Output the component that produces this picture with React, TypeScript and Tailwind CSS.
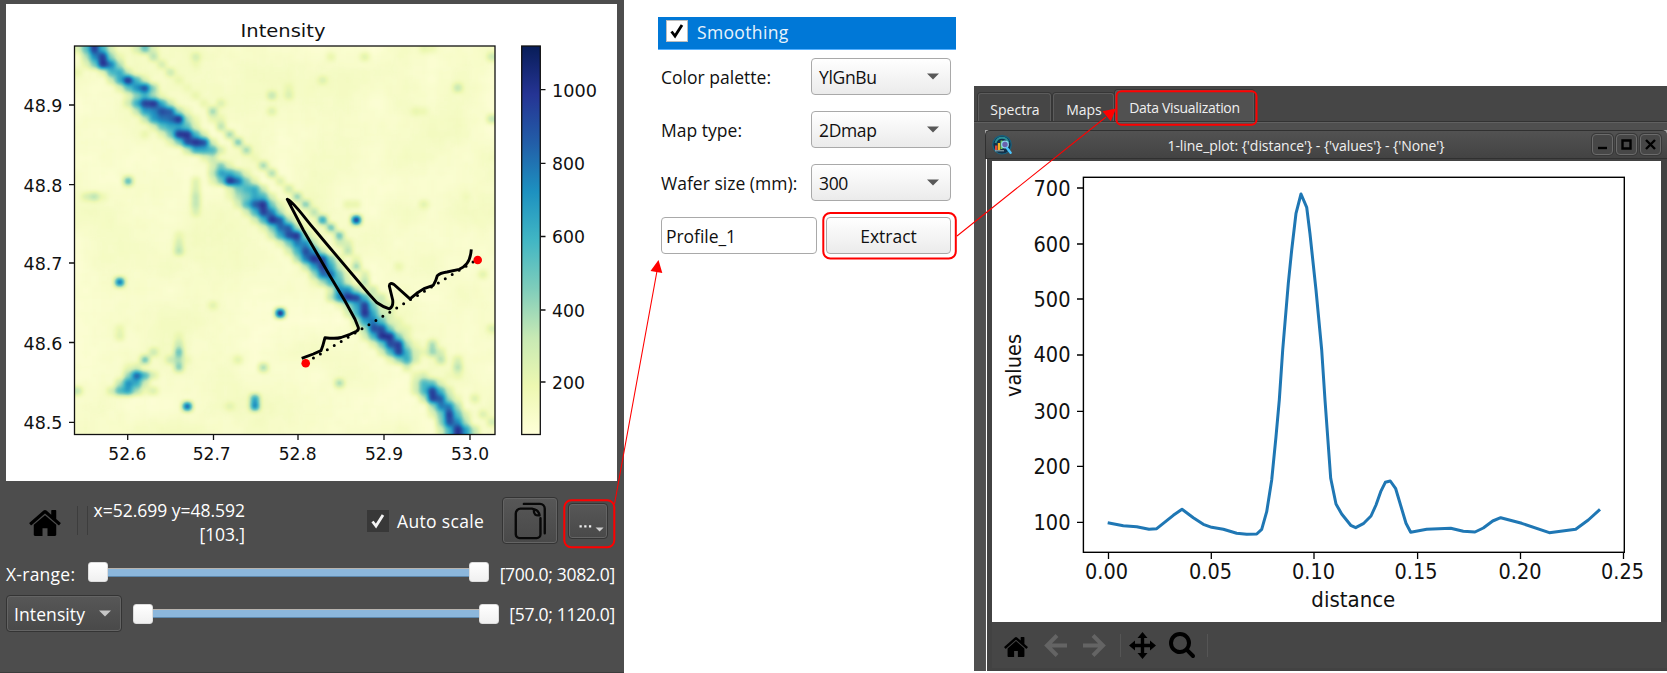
import React from "react";

/* ---------- intensity map data: row -> [column, value] pairs on a 50x50 grid ---------- */
const ROWS: string[] = [
  "1:.45 2:.95 3:.5 7:.2 8:.45 41:.15 42:.12",
  "2:.7 3:.95 4:.35 9:.3 14:.22 30:.15 34:.18 49:.25",
  "2:.4 3:1 4:.75 10:.22 14:.12",
  "3:.15 4:.5 5:.6 11:.25 0:.14",
  "5:.55 6:1 7:.5 12:.15 29:.2",
  "6:.45 7:.7 8:.9 13:.12 25:.15 45:.28",
  "7:.35 8:.5 9:.3 14:.15 23:.28 25:.2",
  "7:.55 8:.95 9:1 10:.6 15:.15 17:.2",
  "8:.65 9:.7 10:.9 11:.85 12:.3 16:.35 23:.2 40:.15 41:.12",
  "9:.65 10:.75 11:.8 12:1 13:.3 16:.15 17:.15 49:.28",
  "10:.45 11:.55 12:.6 13:.45 17:.3",
  "11:.4 12:1 13:1 14:.5 18:.35 8:.14",
  "12:.4 13:.9 14:1 15:.9 16:.2 19:.42",
  "14:.6 15:.6 16:.5 20:.35",
  "15:.15 16:.25 21:.12",
  "16:.2 17:.4 22:.35",
  "17:.65 18:.6 19:.4 23:.33",
  "17:.4 18:1 19:.8 20:.4 6:.5 14:.18 24:.2",
  "19:.4 20:.5 21:.6 14:.2 25:.25",
  "19:.3 20:.4 21:.6 22:.5 1:.2 2:.3 14:.28 26:.38 46:.1",
  "20:.5 21:.85 22:1 23:.4 14:.28 27:.4 32:.15 33:.15 41:.18",
  "21:.5 22:.95 23:.75 14:.2 28:.3",
  "22:.5 23:1 24:.85 25:.3 29:.6 33:.95",
  "23:.4 24:.8 25:.85 26:.3 30:.45",
  "24:.6 25:.9 26:1 27:.3 31:.45 12:.15",
  "25:.4 26:.75 27:.7 31:.22 32:.2 12:.22",
  "26:.5 27:.9 28:.65 32:.3 12:.3",
  "27:.75 28:1 29:.9 30:.4 33:.15",
  "28:.65 29:.95 30:.6 33:.35 38:.15",
  "29:.8 30:.8 31:.4 34:.2 48:.18",
  "29:.3 30:.6 31:.5 34:.3 5:.78",
  "30:.2 31:.7 32:.7 33:.3 35:.25",
  "31:.7 32:1 33:.95 34:.5 36:.25",
  "32:.3 33:.6 34:.95 35:.4 36:.2 37:.2 16:.18",
  "33:.5 34:1 35:.6 37:.2 24:1",
  "34:.65 35:.75 36:.45 38:.15",
  "34:.3 35:.9 36:.9 37:.4 39:.15 5:.15 49:.2",
  "35:.5 36:1 37:1 38:.4 5:.18 12:.15",
  "36:.4 37:.9 38:.95 39:.3 42:.33 12:.25",
  "37:.5 38:.95 39:.5 42:.35 43:.2 12:.45 9:.25",
  "38:.35 39:.55 43:.3 45:.2 12:.3 11:.25 8:.45 19:.18",
  "39:.2 45:.3 12:.4 7:.2 6:.15 22:.34",
  "40:.15 41:.2 45:.15 44:.1 7:.85 8:.5",
  "41:.5 42:.45 6:.7 7:.55 31:.34",
  "41:.5 42:.95 43:.5 5:.5 6:.65 7:.3 9:.2 0:.28",
  "41:.25 42:.95 43:.85 44:.3 47:.2 21:.6",
  "43:.75 44:.75 13:.85 21:.7 18:.18",
  "43:.4 44:.95 45:.45 48:.2",
  "44:.9 45:.7 49:.22",
  "44:.5 45:1 46:.65",
];

const SIZE = 50;

function hash(a: number, b: number): number {
  const s = Math.sin(a * 127.1 + b * 311.7) * 43758.5453;
  return s - Math.floor(s);
}

/** Faint background signal: a coarse and a fine layer of value noise. */
function background(c: number, r: number): number {
  const step = 3.5;
  const x0 = Math.floor(c / step);
  const y0 = Math.floor(r / step);
  const fx = c / step - x0;
  const fy = r / step - y0;
  const coarse =
    hash(x0, y0) * (1 - fx) * (1 - fy) +
    hash(x0 + 1, y0) * fx * (1 - fy) +
    hash(x0, y0 + 1) * (1 - fx) * fy +
    hash(x0 + 1, y0 + 1) * fx * fy;
  return 0.008 + 0.065 * coarse + 0.018 * hash(c + 71, r + 13);
}

const GRID: number[][] = ROWS.map((row, r) => {
  const line = Array.from({ length: SIZE }, (_, c) => background(c, r));
  const given = new Map<number, number>();
  row.split(" ").forEach((pair) => {
    const [c, v] = pair.split(":");
    given.set(Number(c), Number(v));
  });
  given.forEach((v, c) => {
    const inRun = given.has(c - 1) || given.has(c + 1);
    line[c] = inRun && v > 0.55 ? v * 0.92 : v;
  });
  // Cells in a band fade out into their free neighbours.
  given.forEach((v, c) => {
    [-1, 1].forEach((d) => {
      const next = c + d;
      if (v >= 0.3 && given.has(c - d) && !given.has(next) && next >= 0 && next < SIZE) {
        line[next] = Math.max(line[next], v * 0.4);
      }
    });
  });
  return line;
});

const clampIndex = (n: number) => Math.max(0, Math.min(SIZE - 1, n));

const PLOT_FONT = "font-['DejaVu_Sans',sans-serif]";
const UI_FONT = "font-['Open_Sans','Noto_Sans',sans-serif]";

interface LabelProps {
  x: number;
  y: number;
  w: number;
  children: string;
  anchor?: "start" | "middle" | "end";
  size?: number;
  transform?: string;
}

function PlotLabel({ x, y, w, children, anchor = "middle", size = 18, transform }: LabelProps) {
  return (
    <text x={x} y={y} textLength={w} lengthAdjust="spacingAndGlyphs" textAnchor={anchor} fontSize={size} fill="#111" transform={transform}>
      {children}
    </text>
  );
}

function IntensityMap() {
  const cells: React.ReactElement[] = [];
  for (let r = -1; r <= SIZE; r++) {
    for (let c = -1; c <= SIZE; c++) {
      const g = Math.round(GRID[clampIndex(r)][clampIndex(c)] * 255);
      cells.push(
        <rect key={`${r}:${c}`} x={73.3 + c * 8.45} y={45.2 + r * 7.77} width={8.6} height={7.9} fill={`rgb(${g},${g},${g})`} />,
      );
    }
  }
  return (
    <svg viewBox="6 4 611 477" className={`block h-[477px] w-[611px] bg-white ${PLOT_FONT}`}>
      <defs>
        <filter id="ylgnbu" filterUnits="userSpaceOnUse" x="60" y="30" width="450" height="420" colorInterpolationFilters="sRGB">
          <feGaussianBlur stdDeviation="2.9" />
          <feComponentTransfer>
            <feFuncR type="table" tableValues="1 .929 .78 .498 .255 .114 .133 .145 .031" />
            <feFuncG type="table" tableValues="1 .973 .914 .804 .714 .569 .369 .204 .114" />
            <feFuncB type="table" tableValues=".851 .694 .706 .733 .769 .753 .659 .58 .345" />
          </feComponentTransfer>
        </filter>
        <clipPath id="axes">
          <rect x="74.5" y="46" width="420.5" height="388.5" />
        </clipPath>
        <linearGradient id="bar" x1="0" y1="1" x2="0" y2="0">
          <stop offset="0" stopColor="#ffffd9" />
          <stop offset=".125" stopColor="#edf8b1" />
          <stop offset=".25" stopColor="#c7e9b4" />
          <stop offset=".375" stopColor="#7fcdbb" />
          <stop offset=".5" stopColor="#41b6c4" />
          <stop offset=".625" stopColor="#1d91c0" />
          <stop offset=".75" stopColor="#225ea8" />
          <stop offset=".875" stopColor="#253494" />
          <stop offset="1" stopColor="#081d58" />
        </linearGradient>
      </defs>
      <PlotLabel x={283} y={36.5} w={85}>Intensity</PlotLabel>
      <g clipPath="url(#axes)">
        <g filter="url(#ylgnbu)">{cells}</g>
      </g>
      <path d="M306.5 362.3 L475 260.8" stroke="#000" strokeWidth="3" strokeLinecap="round" strokeDasharray="0 8.1" />
      <circle cx="305.7" cy="363.3" r="4.3" fill="#f00" />
      <circle cx="477.7" cy="260" r="4.3" fill="#f00" />
      <path
        d="M301.7 358.3 L313.3 354 L321 350.7 Q323 346 325 337.7 Q336 339 341 337.5 L350 334.3 L356 331.5 Q359 330 358.3 327.5 L355 319.3 L345 301 L330 276 L303.3 230 L287.3 199.3 C295 203 305 219 315 230 L323.3 240 L368.3 293.3 L376.7 302.5 Q383 307 389.3 308.8 Q393.5 307 392.7 300 L389.3 286 Q389.5 282 394 284.5 L410 298.8 L416.7 293.3 L424 288.6 L433.3 285.3 Q436 281 437.3 275.7 Q440 273 447 272 L459.3 269.3 Q464 267 467 263.3 Q470.5 259 471.3 249.3"
        fill="none" stroke="#000" strokeWidth="2.9" strokeLinejoin="round"
      />
      <rect x="74.5" y="46" width="420.5" height="388.5" fill="none" stroke="#111" strokeWidth="1.3" />
      <path d="M127.7 435v5M213.5 435v5M298 435v5M384 435v5M470 435v5M74 422.3h-5M74 342.5h-5M74 263h-5M74 184.7h-5M74 105h-5" stroke="#111" strokeWidth="1.3" />
      <PlotLabel x={127.3} y={460} w={38}>52.6</PlotLabel>
      <PlotLabel x={211.7} y={460} w={38}>52.7</PlotLabel>
      <PlotLabel x={297.7} y={460} w={38}>52.8</PlotLabel>
      <PlotLabel x={384} y={460} w={38}>52.9</PlotLabel>
      <PlotLabel x={470} y={460} w={38}>53.0</PlotLabel>
      <PlotLabel x={43} y={112} w={39}>48.9</PlotLabel>
      <PlotLabel x={43} y={191.5} w={39}>48.8</PlotLabel>
      <PlotLabel x={43} y={270} w={39}>48.7</PlotLabel>
      <PlotLabel x={43} y={349.5} w={39}>48.6</PlotLabel>
      <PlotLabel x={43} y={429} w={39}>48.5</PlotLabel>
      <rect x="521.7" y="46" width="18.6" height="388.5" fill="url(#bar)" stroke="#111" strokeWidth="1.3" />
      <path d="M541 89.7h4.5M541 163.3h4.5M541 236.5h4.5M541 310h4.5M541 382h4.5" stroke="#111" strokeWidth="1.3" />
      <PlotLabel x={552} y={96.5} w={45} anchor="start">1000</PlotLabel>
      <PlotLabel x={552} y={170} w={33} anchor="start">800</PlotLabel>
      <PlotLabel x={552} y={243.3} w={33} anchor="start">600</PlotLabel>
      <PlotLabel x={552} y={316.7} w={33} anchor="start">400</PlotLabel>
      <PlotLabel x={552} y={388.5} w={33} anchor="start">200</PlotLabel>
    </svg>
  );
}

const CURVE =
  "1107.7,522.7 1123.3,525.7 1136.7,526.7 1149,529.3 1156.7,528.7 1173.3,515.3 1182,509.3 1193.3,517.7 1203.3,524.3 1211.7,527.3 1223.3,529.3 1236.7,533.3 1246.7,534.3 1256.7,534 1261.7,529.3 1266.7,511.7 1271.7,480 1276,436.7 1279.3,400 1282.7,350 1288.3,283.3 1291.7,250 1296,213.3 1301,194 1306.7,207.3 1310,234 1316,290 1321.7,350 1325,400 1330.7,478.3 1336,504 1341.7,514 1350.7,525.3 1355.7,527.7 1363.3,523.7 1371,516 1376,505 1380.7,491.7 1385.3,482.3 1390.3,481 1395.7,488.7 1406,523.3 1410.7,532.3 1426.7,529.3 1450.7,528.3 1463.3,531.3 1475,532 1483.3,528 1492.7,521 1500.7,517.7 1521.7,523.3 1549.3,532.7 1575.7,529.3 1588.3,520 1600,509.3";

function LinePlot() {
  return (
    <svg viewBox="992 161 669 461" className={`block h-[461px] w-[669px] bg-white ${PLOT_FONT}`}>
      <polyline points={CURVE} fill="none" stroke="#1f77b4" strokeWidth="3" strokeLinejoin="round" />
      <rect x="1083.4" y="177.3" width="540.9" height="375" fill="none" stroke="#000" strokeWidth="1.4" />
      <path d="M1083 188h-6M1083 244h-6M1083 299h-6M1083 355h-6M1083 411.3h-6M1083 466.3h-6M1083 522.3h-6M1108.5 553v6M1211.3 553v6M1314 553v6M1417.6 553v6M1520.5 553v6M1623.5 553v6" stroke="#000" strokeWidth="1.3" />
      {[
        ["700", 195.5], ["600", 251.5], ["500", 306.5], ["400", 362], ["300", 418.5], ["200", 473.5], ["100", 529.5],
      ].map(([t, y]) => (
        <PlotLabel key={t} x={1070.5} y={Number(y)} w={37} anchor="end" size={20.5}>{String(t)}</PlotLabel>
      ))}
      {[
        ["0.00", 1106.5], ["0.05", 1210.5], ["0.10", 1313.5], ["0.15", 1416], ["0.20", 1520], ["0.25", 1622.5],
      ].map(([t, x]) => (
        <PlotLabel key={t} x={Number(x)} y={579} w={43} size={20.5}>{String(t)}</PlotLabel>
      ))}
      <PlotLabel x={1353.3} y={607} w={84} size={20.5}>distance</PlotLabel>
      <PlotLabel x={0} y={0} w={63} size={20.5} transform="translate(1021 365.5) rotate(-90)">values</PlotLabel>
    </svg>
  );
}

function HomeIcon({ className }: { className: string }) {
  return (
    <svg viewBox="12 253 1640 1283" preserveAspectRatio="none" className={className} fill="#000">
      <path d="M1408 992v480q0 26-19 45t-45 19h-384v-384h-256v384h-384q-26 0-45-19t-19-45v-480q0-1 .5-3t.5-3l575-474 575 474q1 2 1 6zm223-69l-62 74q-8 9-21 11h-3q-13 0-21-7l-692-577-692 577q-12 8-24 7-13-2-21-11l-62-74q-8-10-7-23.5t11-21.5l719-599q32-26 76-26t76 26l244 204v-195q0-14 9-23t23-9h192q14 0 23 9t9 23v408l219 182q10 8 11 21.5t-7 23.5z" />
    </svg>
  );
}

function Check({ stroke }: { stroke: string }) {
  return (
    <svg viewBox="0 0 16 16" className="h-4 w-4">
      <path d="M2.5 8.5 L6 13 L13 2" fill="none" stroke={stroke} strokeWidth="2.8" />
    </svg>
  );
}

function Caret({ className }: { className: string }) {
  return (
    <svg viewBox="0 0 12 7" className={className} fill="currentColor">
      <path d="M0 .5h12L6 6.5z" />
    </svg>
  );
}

function RangeSlider() {
  return (
    <div className="flex h-5 flex-1 items-center">
      <div className="z-10 h-5 w-5 rounded-[3px] border border-[#dcdcdc] bg-gradient-to-b from-white to-[#f0f0f0]" />
      <div className="-mx-px h-[9px] flex-1 border-y border-t-[#b9b4ae] border-b-[#5d88ad] bg-[#8cb7dc]" />
      <div className="z-10 h-5 w-5 rounded-[3px] border border-[#dcdcdc] bg-gradient-to-b from-white to-[#f0f0f0]" />
    </div>
  );
}

const DARK_BUTTON = "rounded-[4px] border border-[#343434] bg-gradient-to-b from-[#575757] to-[#494949] shadow-[inset_0_0_0_1px_#646464]";

function MapPanel() {
  return (
    <section className={`flex h-[673px] w-[624px] flex-col border-b border-[#3c3c3c] bg-[#4d4d4d] pl-[6px] pt-1 text-[17.5px] text-white ${UI_FONT}`}>
      <IntensityMap />
      <div className="flex h-[79px] items-center pr-[10px]">
        <HomeIcon className="ml-[23px] mt-1 h-[26px] w-8" />
        <div className="ml-4 h-[29px] w-[11px] border-x border-[#3d3d3d]" />
        <div className="mt-[3px] w-[157px] whitespace-nowrap text-right leading-6">
          <div className="tracking-[-0.02px]">x=52.699 y=48.592</div>
          <div className="tracking-[-0.1px]">[103.]</div>
        </div>
        <div className="ml-[122px] flex h-[22px] w-[22px] items-center justify-center bg-[#383838]">
          <Check stroke="#f4f4f4" />
        </div>
        <span className="ml-2 w-[105px] whitespace-nowrap pt-px tracking-[0.35px]">Auto scale</span>
        <button className={`flex h-[47px] w-14 items-center justify-center ${DARK_BUTTON}`}>
          <svg viewBox="0 0 34 40" className="h-[38px] w-[33px]" fill="none" stroke="#080808" strokeWidth="2.5" strokeLinecap="round" strokeLinejoin="round">
            <path d="M10 2h17a5 5 0 0 1 5 5v26" />
            <path d="M27.500 17v17a4 4 0 0 1-4 4h-18a4 4 0 0 1-4-4V12a5 5 0 0 1 5-5h12q7 1 8 7q-6 1-6-5" />
          </svg>
        </button>
        <button className={`relative ml-[10px] h-9 w-10 ${DARK_BUTTON}`}>
          <svg viewBox="0 0 40 36" className="h-full w-full" fill="#eee">
            <path d="M11 22.500h2.400v2.500H11zM16 22.500h2.400v2.500H16zM21 22.500h2.400v2.500H21z" />
            <path d="M28 25h8.500l-4.200 4.200z" fill="#d0d0d0" />
          </svg>
        </button>
      </div>
      <div className="flex h-[24px] items-center">
        <span className="w-[82px] whitespace-nowrap pt-1 tracking-[0.25px]">X-range:</span>
        <div className="flex w-[401px]"><RangeSlider /></div>
        <span className="w-[126px] whitespace-nowrap pt-1 text-right tracking-[-0.3px]">[700.0; 3082.0]</span>
      </div>
      <div className="mt-[11px] flex h-[37px] items-center">
        <div className={`flex h-full w-[116px] items-center justify-between pl-[7px] pr-[10px] ${DARK_BUTTON}`}>
          <span className="pt-0.5 tracking-[0.1px]">Intensity</span>
          <Caret className="h-[7px] w-3 text-[#c6c6c6]" />
        </div>
        <div className="ml-[11px] flex w-[366px]"><RangeSlider /></div>
        <span className="w-[116px] whitespace-nowrap pt-0.5 text-right tracking-[-0.3px]">[57.0; 1120.0]</span>
      </div>
    </section>
  );
}

const LIGHT_BOX = "rounded-[4px] border border-[#a9a9a9]";

function OptionRow({ label, value }: { label: string; value: string }) {
  return (
    <div className="flex h-[37px] items-center justify-between pl-[3px] pr-[5px]">
      <span className="whitespace-nowrap pt-0.5 tracking-[0.02px]">{label}</span>
      <div className={`flex h-full w-[140px] items-center justify-between bg-gradient-to-b from-white to-[#ebebeb] pl-[7px] pr-[11px] ${LIGHT_BOX}`}>
        <span className="pt-0.5">{value}</span>
        <Caret className="h-[7px] w-3 text-[#585858]" />
      </div>
    </div>
  );
}

function OptionsPanel() {
  return (
    <section className={`ml-[34px] mt-[17px] flex w-[298px] flex-col gap-4 text-[17.5px] tracking-[-0.35px] text-[#101010] ${UI_FONT}`}>
      <header className="mb-[-8px] flex h-[33px] items-center border-b border-[#55b0ff] bg-[#0078d7] pl-2 text-[#e8f3fc]">
        <div className="mt-[-4px] flex h-[22px] w-[22px] items-center justify-center border border-[#bdbdbd] bg-white">
          <Check stroke="#000" />
        </div>
        <span className="ml-[9px] pb-px tracking-[0.35px]">Smoothing</span>
      </header>
      <OptionRow label="Color palette:" value="YlGnBu" />
      <OptionRow label="Map type:" value="2Dmap" />
      <OptionRow label="Wafer size (mm):" value="300" />
      <div className="flex h-[37px] justify-between pl-[3px] pr-[5px]">
        <div className={`flex w-[156px] items-center bg-white pl-1 pt-0.5 tracking-[-0.05px] ${LIGHT_BOX}`}>Profile_1</div>
        <button className={`w-[125px] bg-gradient-to-b from-white to-[#ebebeb] pt-0.5 tracking-[0px] ${LIGHT_BOX}`}>Extract</button>
      </div>
    </section>
  );
}

function AppLogo() {
  return (
    <svg viewBox="0 0 20 20" className="h-5 w-5">
      <circle cx="10" cy="9.800" r="9.200" fill="#123049" stroke="#17617f" strokeWidth="1.200" />
      <path d="M3.500 8Q5 2.800 10 2.800T16.500 8" stroke="#2a8f96" strokeWidth="2" fill="none" />
      <path d="M3 10.500h2.400v4.500H3z" fill="#e0483c" />
      <path d="M5.800 8h2.400v7H5.800z" fill="#f5b023" />
      <path d="M8.600 5.500h2v8.500h-2z" fill="#6fd05a" />
      <circle cx="13" cy="9.500" r="3.300" fill="#6a62ad" stroke="#8fd6ee" strokeWidth="1.200" />
      <path d="M3 15.800h9" stroke="#cdd" strokeWidth=".8" />
      <path d="M15 13l3.600 4.800" stroke="#4cc4fb" strokeWidth="2.400" strokeLinecap="round" />
    </svg>
  );
}

function WindowButton({ path }: { path: string }) {
  return (
    <button className="flex h-[21px] w-[21px] items-center justify-center rounded-[4px] border border-[#6b6b6b] bg-[#474747] shadow-[0_0_0_1px_#383838]">
      <svg viewBox="0 0 19 19" className="h-[19px] w-[19px]" fill="none" stroke="#000" strokeWidth="2.4">
        <path d={path} />
      </svg>
    </button>
  );
}

const TAB = "flex items-center justify-center whitespace-nowrap rounded-t-[3px] border border-b-0 border-[#5c5c5c] shadow-[0_0_0_1px_#363636]";

function VisualizationPanel() {
  return (
    <section className={`ml-[18px] mt-[16px] flex h-[585px] w-[693px] flex-col overflow-hidden bg-[#464646] text-[14px] text-[#f0f0f0] ${UI_FONT}`}>
      <div className="flex h-9 items-end border-b border-[#333] pl-1">
        <div className={`h-[28px] w-[73px] pl-px pt-[3px] ${TAB} bg-[#464646]`}>Spectra</div>
        <div className={`ml-[2px] h-[28px] w-[61px] pl-px pt-[3px] ${TAB} bg-[#464646]`}>Maps</div>
        <div className={`ml-px h-[31px] w-[139px] pt-0.5 tracking-[-0.32px] ${TAB} bg-[#515151]`}>Data Visualization</div>
      </div>
      <div className="flex flex-1 flex-col border-t border-[#606060] bg-[#4f4f4f] pl-[11px] pt-[7px]">
        <div className="flex justify-between bg-[#a8a8a8]">
          <div className="flex h-[29px] flex-1 items-center rounded-tl-[5px] rounded-tr-[5px] border-y border-l border-[#303030] bg-gradient-to-b from-[#525252] to-[#434343] pl-[6px] pr-[6px]">
            <AppLogo />
            <div className="flex-1 pl-[8px] text-center tracking-[-0.06px]">
              <span className="inline-block pt-0.5">{"1-line_plot: {'distance'} - {'values'} - {'None'}"}</span>
            </div>
            <div className="flex gap-[3px]">
              <WindowButton path="M5 13h9" />
              <WindowButton path="M5.500 5.500h8v8h-8z" />
              <WindowButton path="M5 5l9 9M14 5l-9 9" />
            </div>
          </div>
        </div>
        <div className="flex flex-1 bg-[#424242]">
          <div className="mr-[5px] w-[2px] border-r border-white bg-[#555]" />
          <div className="flex flex-1 flex-col bg-[#424242] pt-[2px]">
            <LinePlot />
            <div className="flex h-[46px] items-center bg-[#464646] pl-3">
              <HomeIcon className="mt-1 h-5 w-6" />
              <svg viewBox="0 0 23 23" className="ml-4 h-[23px] w-[23px]" fill="none" stroke="#646464" strokeWidth="4">
                <path d="M13 1.500L3 11.500L13 21.500M3 11.500h20" />
              </svg>
              <svg viewBox="0 0 23 23" className="ml-4 h-[23px] w-[23px]" fill="none" stroke="#646464" strokeWidth="4">
                <path d="M10 1.500L20 11.500L10 21.500M20 11.500H0" />
              </svg>
              <div className="ml-[14px] h-[23px] w-px bg-[#555]" />
              <svg viewBox="0 0 27 27" className="ml-2 h-[27px] w-[27px]" fill="#000">
                <path d="M13.500 0l5 6h-3.300v5.800H21V8.500l6 5-6 5v-3.300h-5.800V21h3.300l-5 6-5-6h3.300v-5.800H6v3.300l-6-5 6-5v3.300h5.800V6H8.500z" />
              </svg>
              <svg viewBox="0 128 1664 1664" className="ml-[13px] h-[26px] w-[26px]" fill="#000">
                <path d="M1152 832q0-185-131.500-316.500t-316.500-131.500-316.500 131.500-131.500 316.500 131.500 316.500 316.500 131.500 316.500-131.500 131.500-316.500zm512 832q0 52-38 90t-90 38q-54 0-90-38l-343-342q-179 124-399 124-143 0-273.500-55.500t-225-150-150-225-55.500-273.500 55.500-273.500 150-225 225-150 273.500-55.500 273.500 55.500 225 150 150 225 55.500 273.500q0 220-124 399l343 343q37 37 37 90z" />
              </svg>
              <div className="ml-3 h-[23px] w-px bg-[#555]" />
            </div>
          </div>
        </div>
      </div>
    </section>
  );
}

/** Red call-outs and arrows that lie over the three panels. */
function Annotations() {
  return (
    <svg viewBox="0 0 1667 673" className="pointer-events-none absolute inset-0 h-[673px] w-[1667px]" fill="none" stroke="#f00">
      <rect x="564.3" y="500.300" width="50" height="47" rx="7" strokeWidth="2" />
      <rect x="823.3" y="213" width="132.500" height="45.500" rx="7" strokeWidth="2" />
      <rect x="1116.500" y="91.300" width="140" height="33.500" rx="5" strokeWidth="2" />
      <path d="M614.500 504L657 271M957 236L1106 117" strokeWidth="1.100" />
      <path d="M658.500 260l-8 11 11.800 2zM1116 108.500l-13.500 2.800 8.300 10z" fill="#f00" stroke="none" />
    </svg>
  );
}

export default function App() {
  return (
    <main className="relative flex h-[673px] w-[1667px] items-start overflow-hidden bg-white">
      <MapPanel />
      <OptionsPanel />
      <div className="mt-[70px]">
        <VisualizationPanel />
      </div>
      <Annotations />
    </main>
  );
}
